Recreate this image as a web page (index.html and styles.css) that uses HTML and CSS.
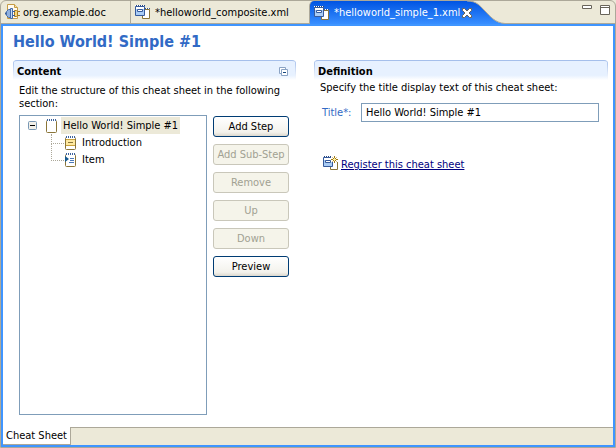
FILE: index.html
```
<!DOCTYPE html>
<html lang="en">

<head>
    <meta charset="UTF-8" />
    <meta name="viewport" content="width=device-width, initial-scale=1.0" />
    <title>helloworld_simple_1.xml</title>
    <link rel="stylesheet" href="styles.css">
</head>

<body>

    <!-- shared icons -->
    <svg class="defs" width="0" height="0" aria-hidden="true">
        <symbol id="icon-sheets" viewBox="0 0 16 16">
            <path d="M7.500 5.500h7v9h-7z" fill="#fff" stroke="#8a7538" />
            <path d="M7 4.500h8" stroke="#fff" />
            <path d="M8 4.500h7" stroke="#39598f" stroke-dasharray="1 1" />
            <path d="M.5 2.500h9v9h-9z" fill="#a9ccf5" stroke="#365a9c" />
            <path d="M1 3h8v2H1z" fill="#fff" />
            <path d="M0 1.500h10" stroke="#fff" />
            <path d="M1 1.500h9" stroke="#27477f" stroke-dasharray="1 1" />
            <path d="M2.500 5.500h5v2h-5z" fill="#fff" stroke="#365a9c" />
        </symbol>
        <symbol id="icon-page" viewBox="0 0 12 16">
            <path d="M.5 3.500q0-1 1-1h8q1 0 1 1v10q0 1-1 1h-8q-1 0-1-1z" fill="#fff" stroke="#8a7538" />
            <path d="M1 1.500h9M1 2.500h9" stroke="#fff" />
            <path d="M1 1.500h9M1 2.500h9" stroke="#3d629c" stroke-dasharray="1 1" />
        </symbol>
    </svg>

    <div class="editor">

        <header class="tab-bar" role="tablist">
            <button class="tab" role="tab">
                <svg class="icon" width="16" height="16" viewBox="0 0 16 16" aria-hidden="true">
                    <path d="M2.500.5h7l3 3v11h-10z" fill="#fffaf0" stroke="#c49b45" />
                    <path d="M9.500.5v3h3" fill="#f3dfa2" stroke="#c49b45" />
                    <path d="M12 7.500h3M12 11.500h3" stroke="#a7791e" />
                    <path d="M9.500 6.500h2l1 1v4l-1 1h-2z" fill="#f7d777" stroke="#a7791e" />
                    <path d="M0 9.500h2" stroke="#345b98" stroke-width="2" />
                    <path d="M1.500 7.500l2-2h2v8h-2l-2-2z" fill="#8fb0e0" stroke="#456ca8" />
                    <path d="M5.500 4.500h2v10h-2z" fill="#c7dbf5" stroke="#456ca8" />
                    <path d="M8 7.500h2M8 11.500h2" stroke="#345b98" />
                </svg>
                org.example.doc
            </button>
            <button class="tab tab-second" role="tab">
                <svg class="icon" width="16" height="16" aria-hidden="true"><use href="#icon-sheets" /></svg>
                *helloworld_composite.xml
            </button>
            <div class="tab-active">
                <button class="tab-label" role="tab" aria-selected="true">
                    <svg class="icon" width="16" height="16" aria-hidden="true"><use href="#icon-sheets" /></svg>
                    *helloworld_simple_1.xml
                </button>
                <button class="tab-close" aria-label="Close">
                    <svg width="10" height="10" viewBox="0 0 10 10" aria-hidden="true">
                        <path d="M.5.5h2L5 3 7.500.5h2v2L7 5l2.500 2.500v2h-2L5 7 2.500 9.500h-2v-2L3 5 .5 2.500z" fill="#fff" stroke="#68645a" />
                    </svg>
                </button>
            </div>
            <svg class="tab-tail" width="38" height="23" viewBox="0 0 38 23" aria-hidden="true">
                <defs>
                    <linearGradient id="tail" x1="0" y1="0" x2="0" y2="1">
                        <stop offset="0" stop-color="#0054e3" />
                        <stop offset="1" stop-color="#388eff" />
                    </linearGradient>
                </defs>
                <path d="M0 0C10 0 13 5 18 10S28 22 38 23H0z" fill="url(#tail)" />
                <path d="M0 0C10 0 13 5 18 10S28 22 38 22.500" fill="none" stroke="#aca899" />
            </svg>
            <div class="window-buttons">
                <button aria-label="Minimize">
                    <svg width="10" height="10" viewBox="0 0 10 10" aria-hidden="true">
                        <path d="M.5.5h9v3h-9z" fill="#fff" stroke="#68645a" />
                    </svg>
                </button>
                <button aria-label="Maximize">
                    <svg width="10" height="10" viewBox="0 0 10 10" aria-hidden="true">
                        <path d="M.5.5h9v9h-9zM0 2.500h10" fill="#fff" stroke="#68645a" />
                    </svg>
                </button>
            </div>
        </header>

        <main class="form">
            <h1>Hello World! Simple #1</h1>

            <div class="columns">
                <section class="section">
                    <div class="section-head">
                        <h2>Content</h2>
                        <button class="collapse" aria-label="Collapse all">
                            <svg width="9" height="9" viewBox="0 0 9 9" aria-hidden="true">
                                <path d="M.5.5h6v6h-6z" fill="#fff" stroke="#8ba3c4" />
                                <path d="M2.500 2.500h6v6h-6z" fill="#fff" stroke="#8ba3c4" />
                                <path d="M4 5.500h3" stroke="#13467f" />
                            </svg>
                        </button>
                    </div>
                    <div class="section-body">
                        <p>Edit the structure of this cheat sheet in the following section:</p>
                        <div class="structure">
                            <ul class="tree" role="tree">
                                <li class="root" role="treeitem" aria-expanded="true">
                                    <svg width="9" height="9" viewBox="0 0 9 9" aria-hidden="true">
                                        <rect x=".5" y=".5" width="8" height="8" rx="1" fill="#f1efe8" stroke="#7898b5" />
                                        <path d="M2 4.500h5" stroke="#000" />
                                    </svg>
                                    <svg class="root-icon" width="12" height="16" aria-hidden="true"><use href="#icon-page" /></svg>
                                    <span class="selected">Hello World! Simple #1</span>
                                </li>
                                <li class="child" role="treeitem">
                                    <svg width="12" height="16" viewBox="0 0 12 16" aria-hidden="true">
                                        <use href="#icon-page" width="12" height="16" />
                                        <path d="M1 5h9v5H1z" fill="#ffe9a0" />
                                        <path d="M1 4.500h9M1 10.500h9" stroke="#c9a13c" />
                                        <path d="M3 7.500h5" stroke="#8a7538" />
                                    </svg>
                                    <span>Introduction</span>
                                </li>
                                <li class="child" role="treeitem">
                                    <svg width="12" height="16" viewBox="0 0 12 16" aria-hidden="true">
                                        <use href="#icon-page" width="12" height="16" />
                                        <path d="M5 6.500h4M5 8.500h4M4 10.500h5" stroke="#4b79b8" />
                                        <path d="M0 4l4 3-4 3z" fill="#14588f" />
                                    </svg>
                                    <span>Item</span>
                                </li>
                            </ul>
                            <div class="actions">
                                <button class="btn">Add Step</button>
                                <button class="btn" disabled>Add Sub-Step</button>
                                <button class="btn" disabled>Remove</button>
                                <button class="btn" disabled>Up</button>
                                <button class="btn" disabled>Down</button>
                                <button class="btn">Preview</button>
                            </div>
                        </div>
                    </div>
                </section>

                <section class="section">
                    <div class="section-head">
                        <h2>Definition</h2>
                    </div>
                    <div class="section-body definition">
                        <p>Specify the title display text of this cheat sheet:</p>
                        <div class="field">
                            <label for="title">Title*:</label>
                            <input id="title" type="text" value="Hello World! Simple #1">
                        </div>
                        <div class="register">
                            <svg width="16" height="16" viewBox="0 0 16 16" aria-hidden="true">
                                <use href="#icon-sheets" width="16" height="16" />
                                <path d="M8 0h8v7H8z" fill="#fff" />
                                <path d="M11.500 1v7M8 4.500h7M9.500 2.500l4 4M13.500 2.500l-4 4" stroke="#a37a12" />
                                <path d="M11 3h1v3h-1zM10 4h3v1h-3z" fill="#fff3a5" />
                            </svg>
                            <a href="#register">Register this cheat sheet</a>
                        </div>
                    </div>
                </section>
            </div>
        </main>

        <footer class="page-tabs" role="tablist">
            <button class="page-tab" role="tab" aria-selected="true">Cheat Sheet</button>
            <div class="page-rest"></div>
        </footer>

    </div>

</body>

</html>
```
FILE: styles.css
```
:root {
    --face: #ece9d8;
    --line: #aca899;
    --blue: #3f95ff;
    --blue-dark: #0054e3;
    --title: #316ac5;
    --field-border: #7f9db9;
}

* {
    box-sizing: border-box
}

body {
    margin: 0;
    background: var(--face);
    color: #000;
    font: 11px/13px "DejaVu Sans Condensed", "Noto Sans", sans-serif;
}

button,
input {
    font: inherit;
    color: inherit;
}

button {
    padding: 0;
    border: 0;
    background: none;
}

svg {
    display: block;
    flex: none;
}

h1,
h2,
p,
ul {
    margin: 0;
    padding: 0;
}

.defs {
    position: absolute
}

.editor {
    min-height: 100vh;
    display: flex;
    flex-direction: column;
    border: 1px solid var(--line);
    border-radius: 6px 6px 0 0;
}

/* editor tabs */
.tab-bar {
    display: flex;
    height: 23px;
    border-bottom: 1px solid var(--line);
    white-space: nowrap;
}

.tab {
    display: flex;
    align-items: center;
    gap: 2px;
    width: 130px;
    padding-left: 4px;
    border-right: 1px solid var(--line);
}

.tab-second {
    width: 178px;
    gap: 4px;
    border-right: 0;
}

.tab-active {
    display: flex;
    align-items: center;
    height: 23px;
    width: 158px;
    padding-left: 4px;
    color: #fff;
    background: linear-gradient(var(--blue-dark), #388eff);
    border-left: 1px solid var(--line);
    border-radius: 5px 0 0 0;
}

.tab-label {
    display: flex;
    align-items: center;
    gap: 4px;
}

.tab-close {
    margin-left: auto;
    margin-right: -5px;
    z-index: 1;
}

.window-buttons {
    display: flex;
    align-items: flex-start;
    gap: 8px;
    margin-left: auto;
    padding: 4px 5px 0 0;
}

/* form */
.form {
    flex: 1;
    display: flex;
    flex-direction: column;
    padding: 6px 5px 12px 10px;
    background: #fff;
    border: 2px solid var(--blue);
    border-bottom: 0;
}

h1 {
    color: var(--title);
    font-size: 16px;
    line-height: 20px;
}

.columns {
    flex: 1;
    display: grid;
    grid-template-columns: 283fr 294fr;
    gap: 18px;
    margin-top: 8px;
}

.section {
    display: flex;
    flex-direction: column;
}

.section-head {
    display: flex;
    align-items: center;
    justify-content: space-between;
    height: 20px;
    padding: 2px 8px 0 4px;
    border-top: 1px solid #a5bfeb;
    border-radius: 4px 4px 0 0;
    background:
        linear-gradient(#a5bfeb, #fff) left / 1px 100% no-repeat,
        linear-gradient(#a5bfeb, #fff) right / 1px 100% no-repeat,
        linear-gradient(#e7f1ff 75%, #fff);
}

h2 {
    font-size: 11px;
    line-height: 16px;
}

.section-body {
    flex: 1;
    display: flex;
    flex-direction: column;
    padding: 4px 7px 0 6px;
}

.structure {
    flex: 1;
    display: flex;
    gap: 6px;
    margin-top: 5px;
}

.tree {
    flex: 1;
    padding: 1px 8px;
    border: 1px solid var(--field-border);
    list-style: none;
}

.tree li {
    display: flex;
    align-items: center;
    height: 17px;
}

.root-icon {
    margin: 0 3px 0 9px
}

.selected {
    padding: 2px;
    background: var(--face);
}

.tree .child {
    position: relative;
    gap: 5px;
    padding-left: 37px;
}

/* dotted connector lines */
.child::before {
    content: "";
    position: absolute;
    left: 23px;
    top: 0;
    width: 12px;
    height: 9px;
    border: 1px dotted var(--line);
    border-width: 0 0 1px 1px;
}

.child + .child::before {
    top: -8px;
    height: 17px;
}

.actions {
    display: flex;
    flex-direction: column;
    gap: 7px;
    width: 76px;
    padding-top: 1px;
}

.btn {
    height: 21px;
    border: 1px solid #003c74;
    border-radius: 3px;
    background: linear-gradient(#fff, #f3f2ec 80%, #dcd8ce);
}

.btn:disabled {
    color: #a1a192;
    border-color: #c9c7ba;
    background: #f5f4ea;
}

.definition {
    padding: 1px 9px 0 6px;
}

.field {
    display: flex;
    align-items: center;
    gap: 9px;
    margin-top: 9px;
    padding-left: 2px;
}

.field label {
    color: var(--title);
    width: 30px;
    white-space: nowrap;
}

.field input {
    flex: 1;
    min-width: 0;
    height: 19px;
    padding: 0 4px;
    border: 1px solid var(--field-border);
}

.register {
    display: flex;
    align-items: flex-end;
    gap: 2px;
    margin-top: 33px;
    padding-left: 3px;
}

.register a {
    color: #000080;
}

/* page tabs */
.page-tabs {
    display: flex;
    height: 20px;
    border: 2px solid var(--blue);
    border-top: 0;
}

.page-tab {
    padding: 0 3px;
    background: #fff;
    border-bottom: 1px solid var(--line);
}

.page-rest {
    flex: 1;
    border: 1px solid var(--line);
    border-width: 1px 0 0 1px;
}
```
